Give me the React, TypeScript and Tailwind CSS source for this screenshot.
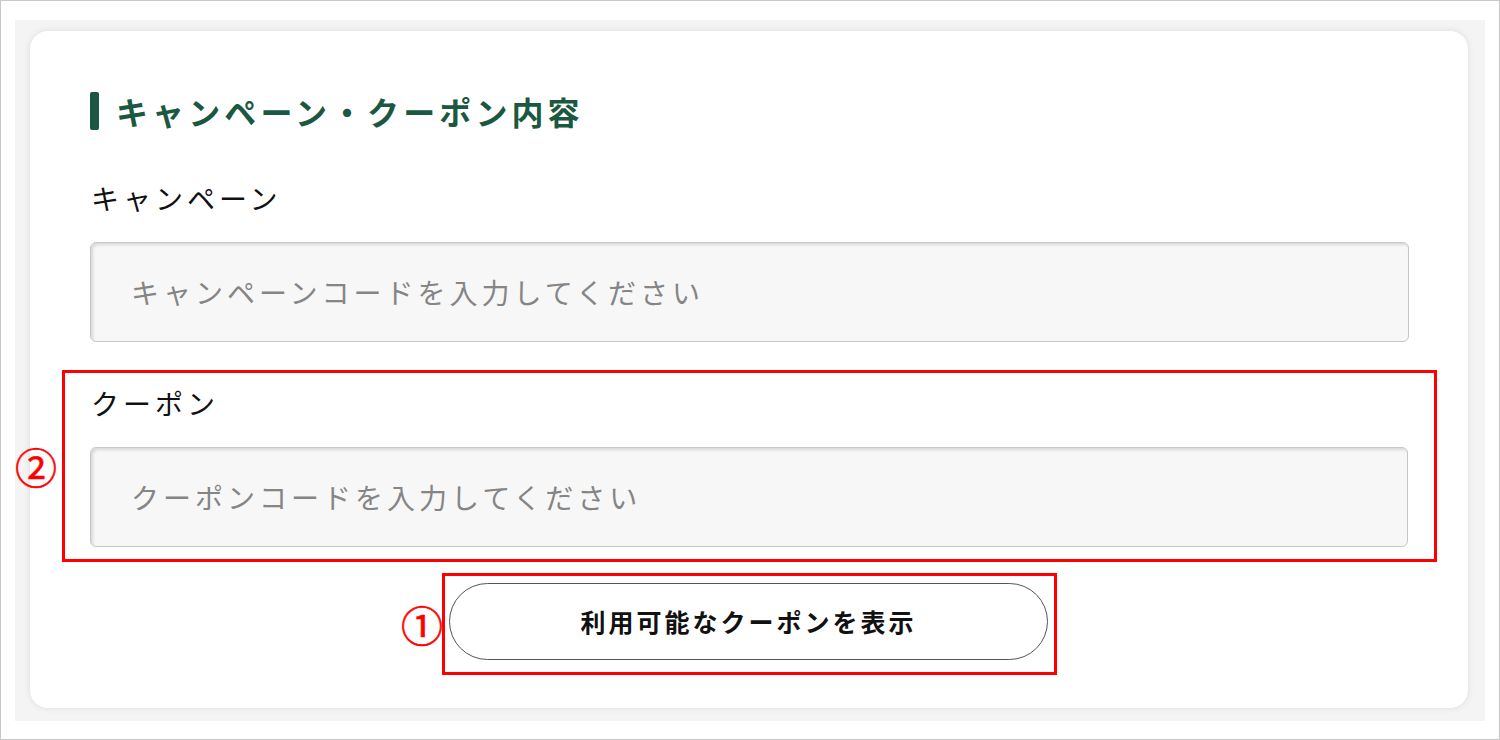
import React from "react";

const font = { fontFamily: '"Noto Sans CJK JP", "Noto Sans", sans-serif' };

type fieldProps = {
  label: string;
  placeholder: string;
};

const Field = ({ label, placeholder }: fieldProps) => {
  return (
    <div className="flex flex-col gap-[24px]">
      <label className="ml-[1px] text-[28px] leading-[40px] tracking-[4px] text-[#111]">
        {label}
      </label>
      <input
        type="text"
        placeholder={placeholder}
        className="h-[100px] w-full rounded-[6px] border border-[#c8c8c8] bg-[#f7f7f7] pl-[40px] text-[28px] tracking-[4px] text-[#333] shadow-[inset_2px_2px_3px_rgba(0,0,0,0.12)] outline-none placeholder:text-[#858585]"
      />
    </div>
  );
};

// red circled number used for the annotations
const Marker = ({ n, gap }: { n: string; gap: string }) => (
  <span
    className={
      "absolute right-full top-1/2 -translate-y-1/2 text-[42px] leading-none text-[#ff0000] [-webkit-text-stroke:0.6px_#ff0000] " +
      gap
    }
  >
    {n}
  </span>
);

const App = () => {
  return (
    <div
      style={font}
      className="w-[1500px] h-[740px] border border-[#c8c8c8] bg-white pl-[14px] pr-[14px] pt-[19px] pb-[18px]"
    >
      <div className="h-full w-full bg-[#f4f4f4] pl-[15px] pr-[17px] pt-[11px] pb-[13px]">
        <div className="h-full rounded-[18px] bg-white pl-[60px] pr-[59px] pt-[61px] shadow-[0_0_6px_rgba(0,0,0,0.1)]">
          <h2 className="flex items-center gap-[17px]">
            <span className="h-[38px] w-[9px] rounded-[2px] bg-[#1b5841]" />
            <span className="text-[32px] font-bold leading-[38px] tracking-[4.1px] text-[#1b5841]">
              キャンペーン・クーポン内容
            </span>
          </h2>

          <div className="mt-[48px]">
            <Field label="キャンペーン" placeholder="キャンペーンコードを入力してください" />
          </div>

          <div className="relative mt-[28px] -mx-[28px] border-[3px] border-[#ff0000] pl-[25px] pr-[26px] pt-[10px] pb-[12px]">
            <Marker n="②" gap="mr-[8px]" />
            <Field label="クーポン" placeholder="クーポンコードを入力してください" />
          </div>

          <div className="mt-[11px] flex justify-center">
            <div className="relative border-[3px] border-[#ff0000] pl-[4px] pr-[6px] pt-[7px] pb-[12px]">
              <Marker n="①" gap="mr-[2px]" />
              <button
                type="button"
                className="flex h-[77px] w-[599px] items-center justify-center rounded-full border border-[#555] bg-white text-[25px] font-bold tracking-[3px] text-[#111]"
              >
                利用可能なクーポンを表示
              </button>
            </div>
          </div>
        </div>
      </div>
    </div>
  );
};

export default App;
